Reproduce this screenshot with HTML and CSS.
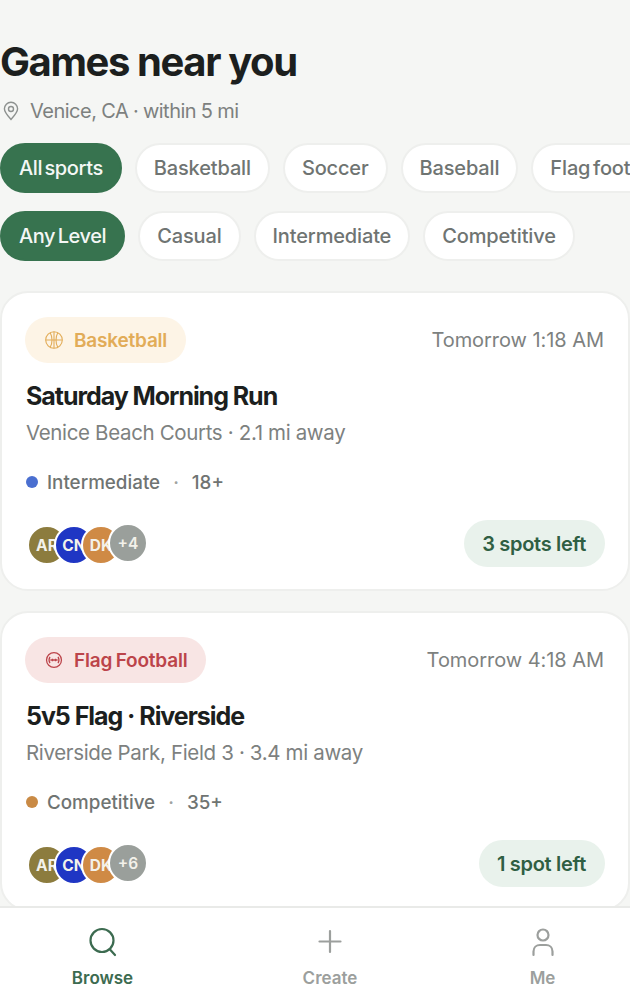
FILE: index.html
```html
<!DOCTYPE html>
<html lang="en">
<head>
<meta charset="utf-8">
<title>Games near you</title>
<link rel="stylesheet" href="styles.css">
</head>
<body>
<div class="app">
  <main class="content">
    <h1 class="title">Games near you</h1>
    <p class="location">
      <svg class="pin" viewBox="0 0 20 20" fill="none" stroke="currentColor" stroke-width="1.4"><path d="M10 18.5c-3.6-4-6.6-7.200-6.600-10.700a6.600 6.600 0 0 1 13.200 0c0 3.500-3 6.700-6.600 10.700z"/><circle cx="10" cy="8" r="2.500"/></svg>
      <span>Venice, CA · within 5 mi</span>
    </p>
    <div class="chips">
      <span class="chip active">All sports</span>
      <span class="chip">Basketball</span>
      <span class="chip">Soccer</span>
      <span class="chip">Baseball</span>
      <span class="chip">Flag football</span>
    </div>
    <div class="chips second">
      <span class="chip active">Any Level</span>
      <span class="chip">Casual</span>
      <span class="chip">Intermediate</span>
      <span class="chip">Competitive</span>
    </div>

    <article class="card">
      <div class="card-top">
        <span class="sport basketball">
          <svg class="sport-icon" viewBox="1 1 18 18" fill="none" stroke="currentColor" stroke-width="1.100"><circle cx="10" cy="10" r="8.300"/><path d="M1.700 10h16.600M10 1.700v16.600M6.200 2.800c2.400 4.200 2.400 10.200 0 14.400M13.800 2.800c-2.400 4.200-2.400 10.200 0 14.400"/></svg>
          Basketball
        </span>
        <span class="when">Tomorrow 1:18 AM</span>
      </div>
      <h2 class="name">Saturday Morning Run</h2>
      <p class="place">Venice Beach Courts · 2.1 mi away</p>
      <div class="meta">
        <span class="dot blue"></span><span>Intermediate</span><span class="sep">·</span><span>18+</span>
      </div>
      <div class="card-bottom">
        <div class="avatars">
          <span class="avatar olive">AR</span>
          <span class="avatar navy">CN</span>
          <span class="avatar amber">DK</span>
          <span class="avatar more">+4</span>
        </div>
        <span class="spots">3 spots left</span>
      </div>
    </article>

    <article class="card">
      <div class="card-top">
        <span class="sport flag">
          <svg class="sport-icon" viewBox="0 0 20 20" fill="none" stroke="currentColor" stroke-width="1.400"><circle cx="10" cy="10" r="8.300"/><path d="M5.500 6.500c-1.300 2.200-1.300 4.800 0 7M14.500 6.500c1.300 2.200 1.300 4.800 0 7M6 10h8M8.300 8.500v3M11.700 8.500v3"/></svg>
          Flag Football
        </span>
        <span class="when">Tomorrow 4:18 AM</span>
      </div>
      <h2 class="name">5v5 Flag · Riverside</h2>
      <p class="place">Riverside Park, Field 3 · 3.4 mi away</p>
      <div class="meta">
        <span class="dot orange"></span><span>Competitive</span><span class="sep">·</span><span>35+</span>
      </div>
      <div class="card-bottom">
        <div class="avatars">
          <span class="avatar olive">AR</span>
          <span class="avatar navy">CN</span>
          <span class="avatar amber">DK</span>
          <span class="avatar more">+6</span>
        </div>
        <span class="spots">1 spot left</span>
      </div>
    </article>
  </main>

  <nav class="tabbar">
    <div class="tab current">
      <svg class="tab-icon" viewBox="0 0 32 32" fill="none" stroke="currentColor" stroke-width="2.200" stroke-linecap="round"><circle cx="15" cy="14.500" r="11.500"/><path d="M23 23.500l5 5.500"/></svg>
      <span>Browse</span>
    </div>
    <div class="tab">
      <svg class="tab-icon" viewBox="0 0 32 32" fill="none" stroke="currentColor" stroke-width="2.200" stroke-linecap="round"><path d="M16 5v21M5.500 15.500h21"/></svg>
      <span>Create</span>
    </div>
    <div class="tab">
      <svg class="tab-icon" viewBox="0 0 32 32" fill="none" stroke="currentColor" stroke-width="2.200" stroke-linecap="round"><circle cx="16" cy="9" r="5.500"/><path d="M6.500 29v-3.500c0-4 3-6.500 6.500-6.500h6c3.500 0 6.500 2.500 6.500 6.500V29"/></svg>
      <span>Me</span>
    </div>
  </nav>
</div>
</body>
</html>
```

FILE: styles.css
```css
* { box-sizing: border-box; }
html, body { margin: 0; padding: 0; }
body {
  background: #f5f6f4;
  font-family: Inter, "Liberation Sans", sans-serif;
  color: #1c1f1e;
}
.app {
  width: 630px;
  height: 1008px;
  display: flex;
  flex-direction: column;
  overflow: hidden;
}
.content {
  flex: 1;
  min-height: 0;
  overflow: hidden;
  padding-top: 38px;
}
.title {
  margin: 0;
  font-size: 40px;
  line-height: 48px;
  font-weight: 700;
  letter-spacing: -1.4px;
  color: #1c1f1e;
}
.location {
  display: flex;
  align-items: center;
  gap: 9px;
  margin: 12px 0 0;
  padding-left: 1px;
  height: 26px;
  font-size: 20px;
  letter-spacing: -0.5px;
  word-spacing: -0.4px;
  color: #7d817f;
}
.pin { width: 20px; height: 20px; color: #8d918f; flex: none; }
.chips {
  display: flex;
  gap: 13px;
  margin-top: 19px;
  white-space: nowrap;
}
.chips.second { margin-top: 18px; }
.chip {
  flex: none;
  display: flex;
  align-items: center;
  height: 50px;
  padding: 0 17px;
  border-radius: 25px;
  background: #fff;
  border: 2px solid #eeefed;
  font-size: 20px;
  font-weight: 500;
  letter-spacing: -0.15px;
  word-spacing: -2.500px;
  color: #6f7472;
}
.chip.active {
  background: #37734f;
  border-color: #37734f;
  color: #f4f7f5;
  letter-spacing: -0.4px;
}
.card {
  height: 300px;
  margin-top: 20px;
  padding: 24px 24px;
  background: #fff;
  border: 2px solid #eeefed;
  border-radius: 28px;
}
.chips.second + .card { margin-top: 30px; }
.card-top {
  display: flex;
  justify-content: space-between;
  align-items: center;
}
.sport {
  display: flex;
  align-items: center;
  gap: 11px;
  height: 46px;
  padding: 0 19px 0 20px;
  margin-left: -1px;
  border-radius: 23px;
  font-size: 19px;
  font-weight: 600;
  letter-spacing: -0.2px;
  word-spacing: -1px;
}
.sport-icon { width: 18px; height: 18px; flex: none; }
.basketball { background: #fdf4e6; color: #e2ac58; }
.flag { background: #f8e5e4; color: #bc444a; }
.when {
  font-size: 20px;
  letter-spacing: -0.05px;
  color: #7d817f;
}
.name {
  margin: 16px 0 0;
  font-size: 25px;
  line-height: 34px;
  font-weight: 700;
  letter-spacing: -1.05px;
  color: #1c1f1e;
}
.place {
  margin: 6px 0 0;
  font-size: 20.500px;
  line-height: 28px;
  letter-spacing: -0.35px;
  color: #7d817f;
}
.meta {
  display: flex;
  align-items: center;
  margin-top: 22px;
  height: 26px;
  font-size: 18.800px;
  font-weight: 500;
  color: #6f7472;
}
.dot { width: 12px; height: 12px; border-radius: 50%; margin-right: 9px; }
.dot.blue { background: #4a6fd0; }
.dot.orange { background: #c98a45; }
.sep { margin: 0 13px; color: #a0a3a1; }
.card-bottom {
  display: flex;
  justify-content: space-between;
  align-items: center;
  margin-top: 25px;
}
.avatars { display: flex; padding: 3px 0 0 1px; }
.avatar {
  position: relative;
  display: flex;
  align-items: center;
  justify-content: center;
  width: 40px;
  height: 40px;
  margin-left: -13px;
  border: 2px solid #fff;
  border-radius: 50%;
  font-size: 15.500px;
  font-weight: 700;
  color: #f3f1ea;
  white-space: nowrap;
}
.avatar:first-child { margin-left: 0; }
.olive { background: #8c7c3e; }
.navy { background: #1f36c4; }
.amber { background: #cf8a45; }
.more { background: #9a9f9b; top: -2px; font-weight: 600; }
.spots {
  display: flex;
  align-items: center;
  height: 47px;
  padding: 0 19px 0 18px;
  border-radius: 24px;
  background: #e9f2ec;
  font-size: 20px;
  font-weight: 600;
  letter-spacing: -0.3px;
  color: #2f5f43;
  margin-right: -1px;
}
.tabbar {
  flex: none;
  height: 102px;
  display: flex;
  background: #fff;
  border-top: 2px solid #e9eae8;
}
.tab {
  display: flex;
  flex-direction: column;
  align-items: center;
  padding-top: 18px;
  font-size: 17px;
  font-weight: 600;
  color: #9c9f9d;
}
.tab:nth-child(1) { width: 205px; }
.tab:nth-child(2) { width: 250px; }
.tab:nth-child(3) { width: 175px; }
.tab span { margin-top: 10px; }
.tab.current { color: #3c6b50; }
.tab-icon { width: 32px; height: 32px; }
```
